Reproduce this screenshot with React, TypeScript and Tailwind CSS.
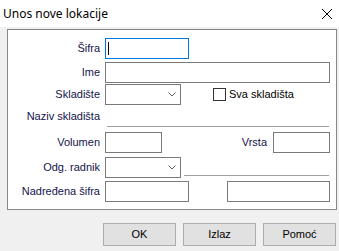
import type { ReactNode } from 'react';

const label = "text-[11px] text-[#14144a] font-['Liberation_Sans',Arial,sans-serif]";

function Field({ className = '', focused = false }: { className?: string; focused?: boolean }) {
    return (
        <div
            className={`h-[21px] bg-white border ${focused ? 'border-[#0078d7]' : 'border-[#7a7a7a]'} relative ${className}`}
        >
            {focused && <div className="absolute left-[2px] top-[3px] w-px h-[13px] bg-black" />}
        </div>
    );
}

function Combo() {
    return (
        <div className="h-[21px] w-[76px] bg-white border border-[#7a7a7a] flex items-center justify-end pr-[4px]">
            <svg width="8" height="5" viewBox="0 0 8 5">
                <polyline points="0.5,0.5 4,4 7.5,0.5" fill="none" stroke="#606060" strokeWidth="1" />
            </svg>
        </div>
    );
}

function Row({ title, className = '', children }: { title: string; className?: string; children?: ReactNode }) {
    return (
        <div className={`flex items-center ${className}`}>
            <div className={`w-[92px] shrink-0 text-right whitespace-nowrap ${label}`}>{title}</div>
            <div className="ml-[5px] flex-1 flex items-center">{children}</div>
        </div>
    );
}

function Button({ children }: { children: ReactNode }) {
    return (
        <button className="w-[73px] h-[23px] bg-[#e1e1e1] border border-[#adadad] text-[11px] text-black font-['Liberation_Sans',Arial,sans-serif]">
            {children}
        </button>
    );
}

export default function App() {
    return (
        <div className="w-[339px] h-[251px] bg-[#f0f0f0] flex flex-col overflow-hidden">
            {/* Title bar */}
            <div className="h-[27px] bg-white flex items-center justify-between pl-[3px] pr-[7px] shrink-0">
                <span className="text-[12px] text-black font-['Noto_Sans',sans-serif] leading-none">Unos nove lokacije</span>
                <svg width="10" height="10" viewBox="0 0 10 10">
                    <line x1="0" y1="0" x2="10" y2="10" stroke="#000" strokeWidth="1" />
                    <line x1="10" y1="0" x2="0" y2="10" stroke="#000" strokeWidth="1" />
                </svg>
            </div>

            {/* Group box */}
            <div className="ml-[7px] mt-[2px] w-[330px] bg-white border border-[#888888] pr-[6px] pb-[7px] flex flex-col">
                <Row title="Šifra" className="mt-[8px]">
                    <Field className="w-[84px]" focused />
                </Row>
                <Row title="Ime" className="mt-[3px]">
                    <Field className="flex-1" />
                </Row>
                <Row title="Skladište" className="mt-[1px]">
                    <Combo />
                    <div className="ml-[32px] w-[13px] h-[13px] border border-[#333333] bg-white" />
                    <span className="ml-[3px] text-[11px] text-black font-['Liberation_Sans',Arial,sans-serif]">Sva skladišta</span>
                </Row>
                <div className="flex items-center h-[22px]">
                    <div className={`w-[92px] shrink-0 text-right whitespace-nowrap ${label}`}>Naziv skladišta</div>
                    <div className="ml-[7px] mr-[1px] flex-1 h-full border-b border-[#a0a0a0]" />
                </div>
                <Row title="Volumen" className="mt-[5px]">
                    <Field className="w-[57px]" />
                    <div className="flex-1" />
                    <span className={`mr-[6px] ${label}`}>Vrsta</span>
                    <Field className="w-[57px]" />
                </Row>
                <Row title="Odg. radnik" className="mt-[4px]">
                    <Combo />
                    <div className="ml-[3px] mr-[1px] mt-[15px] flex-1 border-t border-[#a0a0a0]" />
                </Row>
                <Row title="Nadređena šifra" className="mt-[3px]">
                    <Field className="w-[84px]" />
                    <div className="flex-1" />
                    <Field className="w-[103px]" />
                </Row>
            </div>

            {/* Buttons */}
            <div className="mt-[13px] flex justify-end gap-[7px] pr-[3px]">
                <Button>OK</Button>
                <Button>Izlaz</Button>
                <Button>Pomoć</Button>
            </div>
        </div>
    );
}
